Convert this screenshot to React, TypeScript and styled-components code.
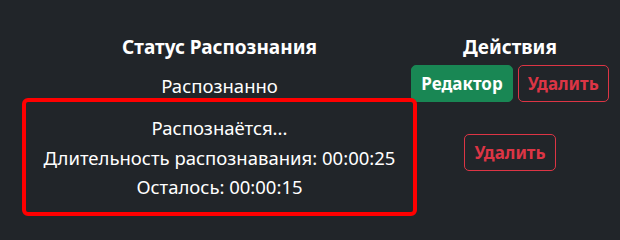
import styled, { createGlobalStyle } from "styled-components"

const GlobalStyle = createGlobalStyle`
    html, body {
        margin: 0;
        padding: 0;
        background: #212529;
    }
    body {
        font-family: "Noto Sans", "Liberation Sans", sans-serif;
        color: #ffffff;
    }
`

const rows = [
    {
        status: ["Распознанно"],
        editable: true,
        highlight: false,
    },
    {
        status: [
            "Распознаётся...",
            "Длительность распознавания: 00:00:25",
            "Осталось: 00:00:15",
        ],
        editable: false,
        highlight: true,
    },
]

export default function App() {
    return (
        <>
            <GlobalStyle />
            <Page>
                <Table>
                    <HeadCell>Статус Распознания</HeadCell>
                    <HeadCell>Действия</HeadCell>
                    {
                        rows.map((row, index) => (
                            <Row key={index}>
                                <StatusCell $highlight={row.highlight}>
                                    {row.status.map((line, i) => (
                                        <Line key={i}>{line}</Line>
                                    ))}
                                </StatusCell>
                                <ActionCell $top={!row.editable}>
                                    {row.editable && <Button $variant="edit">Редактор</Button>}
                                    <Button $variant="delete">Удалить</Button>
                                </ActionCell>
                            </Row>
                        ))
                    }
                </Table>
            </Page>
        </>
    )
}

const Page = styled.div`
    width: 620px;
    height: 240px;
    padding: 30px 0 0 26px;
    box-sizing: border-box;
`

const Table = styled.div`
    display: grid;
    grid-template-columns: 387px 194px;
`

const HeadCell = styled.div`
    height: 34px;
    display: flex;
    align-items: center;
    justify-content: center;
    font-size: 19px;
    font-weight: 700;
`

const Row = styled.div`
    display: contents;
`

const StatusCell = styled.div<{ $highlight: boolean }>`
    display: flex;
    flex-direction: column;
    align-items: center;
    justify-content: center;
    font-size: 18.5px;
    ${p => p.$highlight ? `
        height: 110px;
        justify-content: flex-start;
        padding-top: 11px;
        box-sizing: border-box;
        outline: 4px solid #ff0000;
        border-radius: 2px;
    ` : `
        height: 38px;
        padding-top: 6px;
        box-sizing: border-box;
    `}
`

const Line = styled.div`
    line-height: 29.5px;
    white-space: nowrap;
`

const ActionCell = styled.div<{ $top: boolean }>`
    display: flex;
    justify-content: center;
    gap: 5px;
    align-items: ${p => p.$top ? "flex-start" : "center"};
    padding-top: ${p => p.$top ? "32px" : "0"};
    margin-top: ${p => p.$top ? "0" : "1px"};
`

const Button = styled.button<{ $variant: "edit" | "delete" }>`
    height: 37px;
    padding: 0 9px;
    border-radius: 5px;
    font-family: "Noto Sans", "Liberation Sans", sans-serif;
    font-size: 17px;
    font-weight: 700;
    white-space: nowrap;
    cursor: pointer;
    border: 1px solid ${p => p.$variant === "edit" ? "#198754" : "#dc3545"};
    background: ${p => p.$variant === "edit" ? "#198754" : "transparent"};
    color: ${p => p.$variant === "edit" ? "#ffffff" : "#dc3545"};
`
